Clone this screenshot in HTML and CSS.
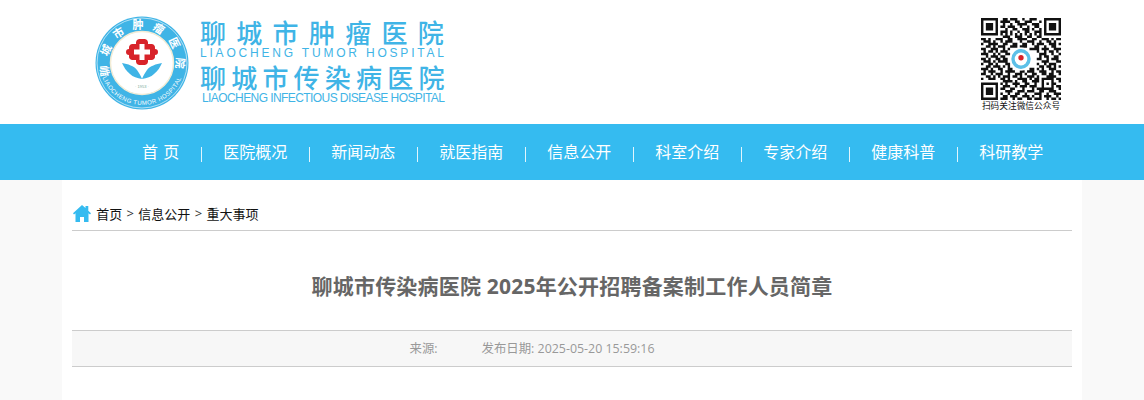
FILE: index.html
```html
<!DOCTYPE html>
<html lang="zh-CN">
<head>
    <meta charset="UTF-8">
    <meta name="viewport" content="width=device-width, initial-scale=1.0">
    <title>聊城市传染病医院 2025年公开招聘备案制工作人员简章</title>
    <link rel="stylesheet" href="styles.css">
</head>
<body>
    <header class="site-header">
        <div class="logo">
            <svg class="logo-badge" width="94" height="94" viewBox="0 0 94 94">
                <defs>
                    <path id="ringTop" d="M47 81a34 34 0 1 1 0-68a34 34 0 1 1 0 68"/>
                    <path id="ringBottom" d="M5 47a42 42 0 0 0 84 0"/>
                </defs>
                <circle cx="47" cy="47" r="46.500" fill="#3fb4e6"/>
                <circle cx="47" cy="47" r="45" fill="none" stroke="#fff" stroke-width=".6"/>
                <circle cx="47" cy="47" r="31.500" fill="#fff" stroke="#f3ecd6" stroke-width="1.500"/>
                <text class="ring-cn"><textPath href="#ringTop" startOffset="50%" text-anchor="middle">聊城市肿瘤医院</textPath></text>
                <text class="ring-en"><textPath href="#ringBottom" startOffset="50%" text-anchor="middle">LIAOCHENG TUMOR HOSPITAL</textPath></text>
                <path fill="#d8232a" d="M35 26a3.500 3.500 0 0 1 3-3h6a3.500 3.500 0 0 1 3 3v2h3a3.500 3.500 0 0 1 4 4v1a3 3 0 0 1 0 6v1a3.500 3.500 0 0 1-4 4h-3v2a3.500 3.500 0 0 1-3 3h-6a3.500 3.500 0 0 1-3-3v-2h-3a3.500 3.500 0 0 1-4-4v-1a3 3 0 0 1 0-6v-1a3.500 3.500 0 0 1 4-4h3z" transform="translate(6)"/>
                <path fill="#fff" d="M44.500 28h5v5.500h5.500v5h-5.500v5.500h-5v-5.500h-5.500v-5h5.500z"/>
                <path fill="#3fb4e6" d="M27 47c6 1 12 3 15 7 2 3 4 6 5 9-5-1-9-2-12-5-4-3-6-7-8-11z"/>
                <path fill="#3fb4e6" d="M67 47c-6 1-12 3-15 7-2 3-4 6-5 9 5-1 9-2 12-5 4-3 6-7 8-11z"/>
                <text class="ring-year" x="47" y="71.500" text-anchor="middle">· 1953 ·</text>
            </svg>
            <div class="logo-text">
                <div class="logo-cn">聊城市肿瘤医院</div>
                <div class="logo-en">LIAOCHENG TUMOR HOSPITAL</div>
                <div class="logo-cn logo-cn-second">聊城市传染病医院</div>
                <div class="logo-en logo-en-second">LIAOCHENG INFECTIOUS DISEASE HOSPITAL</div>
            </div>
        </div>
        <div class="qr-box">
            <svg class="qr" width="80" height="82" viewBox="0 0 33 33" preserveAspectRatio="none">
                <path fill="none" stroke="#111" stroke-width="1" d="M0 .5h7M9 .5h2M12 .5h3M17 .5h1M20 .5h3M26 .5h7
                    M0 1.500h1M6 1.500h1M8 1.500h4M14 1.500h2M18 1.500h3M24 1.500h1M26 1.500h1M32 1.500h1
                    M0 2.500h1M2 2.500h3M6 2.500h1M9 2.500h1M12 2.500h1M15 2.500h4M21 2.500h3M26 2.500h1M28 2.500h3M32 2.500h1
                    M0 3.500h1M2 3.500h3M6 3.500h1M8 3.500h2M11 3.500h3M16 3.500h1M19 3.500h1M22 3.500h2M26 3.500h1M28 3.500h3M32 3.500h1
                    M0 4.500h1M2 4.500h3M6 4.500h1M10 4.500h1M13 4.500h2M17 4.500h3M21 4.500h1M24 4.500h1M26 4.500h1M28 4.500h3M32 4.500h1
                    M0 5.500h1M6 5.500h1M8 5.500h3M12 5.500h1M15 5.500h1M18 5.500h2M22 5.500h3M26 5.500h1M32 5.500h1
                    M0 6.500h7M8 6.500h1M10 6.500h1M12 6.500h1M14 6.500h1M16 6.500h1M18 6.500h1M20 6.500h1M22 6.500h1M24 6.500h1M26 6.500h7
                    M9 7.500h3M14 7.500h3M19 7.500h2M23 7.500h2
                    M0 8.500h2M3 8.500h1M6 8.500h3M11 8.500h2M15 8.500h4M21 8.500h2M25 8.500h3M29 8.500h1M31 8.500h2
                    M1 9.500h3M5 9.500h1M8 9.500h1M10 9.500h3M16 9.500h1M19 9.500h3M24 9.500h1M27 9.500h2M30 9.500h1
                    M0 10.500h1M3 10.500h4M9 10.500h2M13 10.500h2M17 10.500h2M21 10.500h1M23 10.500h3M28 10.500h3M32 10.500h1
                    M2 11.500h2M5 11.500h1M7 11.500h3M12 11.500h3M16 11.500h3M22 11.500h2M26 11.500h1M29 11.500h2
                    M0 12.500h2M4 12.500h3M9 12.500h1M11 12.500h1M20 12.500h4M25 12.500h3M30 12.500h3
                    M1 13.500h1M3 13.500h2M6 13.500h1M8 13.500h3M23 13.500h1M26 13.500h1M28 13.500h2M31 13.500h1
                    M0 14.500h3M5 14.500h1M7 14.500h1M10 14.500h2M24 14.500h3M29 14.500h1M32 14.500h1
                    M2 15.500h1M4 15.500h3M8 15.500h2M24 15.500h1M26 15.500h2M30 15.500h2
                    M0 16.500h2M3 16.500h1M6 16.500h2M9 16.500h2M23 16.500h2M27 16.500h1M29 16.500h3
                    M1 17.500h3M5 17.500h1M7 17.500h4M25 17.500h3M31 17.500h2
                    M0 18.500h1M3 18.500h2M6 18.500h1M10 18.500h2M23 18.500h1M26 18.500h1M28 18.500h3
                    M2 19.500h2M5 19.500h3M9 19.500h1M11 19.500h1M24 19.500h2M27 19.500h2M30 19.500h1M32 19.500h1
                    M0 20.500h3M4 20.500h1M7 20.500h2M11 20.500h2M20 20.500h2M23 20.500h1M25 20.500h1M28 20.500h3
                    M1 21.500h1M3 21.500h3M8 21.500h1M10 21.500h4M16 21.500h2M19 21.500h3M24 21.500h3M29 21.500h1M31 21.500h2
                    M0 22.500h2M4 22.500h1M6 22.500h3M11 22.500h1M14 22.500h3M18 22.500h1M21 22.500h2M25 22.500h2M28 22.500h2M32 22.500h1
                    M2 23.500h2M5 23.500h1M7 23.500h1M9 23.500h3M13 23.500h2M16 23.500h1M19 23.500h3M23 23.500h1M27 23.500h4
                    M0 24.500h1M3 24.500h3M8 24.500h2M11 24.500h1M15 24.500h4M20 24.500h1M22 24.500h2M25 24.500h5M31 24.500h2
                    M9 25.500h4M14 25.500h1M17 25.500h2M21 25.500h3M25 25.500h1M29 25.500h1M32 25.500h1
                    M0 26.500h7M8 26.500h1M10 26.500h1M13 26.500h3M18 26.500h2M22 26.500h1M25 26.500h1M27 26.500h1M29 26.500h2
                    M0 27.500h1M6 27.500h1M9 27.500h3M14 27.500h1M16 27.500h3M20 27.500h3M25 27.500h1M29 27.500h1M31 27.500h2
                    M0 28.500h1M2 28.500h3M6 28.500h1M8 28.500h2M12 28.500h2M17 28.500h1M21 28.500h1M23 28.500h7M32 28.500h1
                    M0 29.500h1M2 29.500h3M6 29.500h1M10 29.500h3M15 29.500h3M19 29.500h3M24 29.500h2M28 29.500h3
                    M0 30.500h1M2 30.500h3M6 30.500h1M8 30.500h1M11 30.500h1M14 30.500h2M18 30.500h1M22 30.500h3M27 30.500h1M30 30.500h3
                    M0 31.500h1M6 31.500h1M9 31.500h2M12 31.500h3M17 31.500h3M21 31.500h1M24 31.500h1M26 31.500h3M31 31.500h1
                    M0 32.500h7M8 32.500h3M13 32.500h1M15 32.500h2M19 32.500h2M22 32.500h3M27 32.500h1M29 32.500h2M32 32.500h1"/>
                <circle cx="16.500" cy="16.500" r="4.600" fill="#fff"/>
                <circle cx="16.500" cy="16.500" r="4" fill="#5cc0e8"/>
                <circle cx="16.500" cy="16.500" r="2.600" fill="#fff"/>
                <circle cx="16.500" cy="16" r="1.100" fill="#d8232a"/>
            </svg>
            <div class="qr-caption">扫码关注微信公众号</div>
        </div>
    </header>

    <nav class="main-nav">
        <a href="#" class="nav-home">首 页</a>
        <span class="nav-sep"></span>
        <a href="#">医院概况</a>
        <span class="nav-sep"></span>
        <a href="#">新闻动态</a>
        <span class="nav-sep"></span>
        <a href="#">就医指南</a>
        <span class="nav-sep"></span>
        <a href="#">信息公开</a>
        <span class="nav-sep"></span>
        <a href="#">科室介绍</a>
        <span class="nav-sep"></span>
        <a href="#">专家介绍</a>
        <span class="nav-sep"></span>
        <a href="#">健康科普</a>
        <span class="nav-sep"></span>
        <a href="#">科研教学</a>
    </nav>

    <main class="container">
        <div class="breadcrumb">
            <svg class="home-icon" width="18" height="17" viewBox="0 0 18 17">
                <path fill="#35bbf0" d="M9 0l3.500 3V1h2.800v4.800L18 8.200l-1 1.300-1.500-1.200V17h-4.500v-5H7v5H2.500V8.300L1 9.500 0 8.200z"/>
            </svg>
            <a href="#">首页</a>
            <span class="crumb-sep">&gt;</span>
            <a href="#">信息公开</a>
            <span class="crumb-sep">&gt;</span>
            <a href="#">重大事项</a>
        </div>

        <h1 class="article-title">聊城市传染病医院 2025年公开招聘备案制工作人员简章</h1>

        <div class="article-meta">
            <span>来源:</span>
            <span>发布日期: 2025-05-20 15:59:16</span>
        </div>
    </main>
</body>
</html>
```

FILE: styles.css
```css
body {
    margin: 0;
    padding: 0;
    font-family: "Open Sans", "Noto Sans CJK SC", sans-serif;
    background: #f9f9f9;
}

a {
    color: inherit;
    text-decoration: none;
}

.site-header {
    height: 124px;
    background: white;
    display: flex;
    justify-content: space-between;
    align-items: flex-start;
    padding: 0 83px 0 95px;
    box-sizing: border-box;
}

.logo {
    display: flex;
    gap: 11px;
    padding-top: 15px;
}

.logo-badge {
    display: block;
    margin-top: 1px;
}

.ring-cn {
    font-size: 11px;
    font-weight: bold;
    fill: white;
    letter-spacing: 8px;
}

.ring-en {
    font-size: 6px;
    font-family: "Liberation Sans", sans-serif;
    fill: white;
    letter-spacing: .5px;
}

.ring-year {
    font-size: 4px;
    font-family: "Liberation Sans", sans-serif;
    fill: #7a9;
}

.logo-text {
    width: 244px;
    color: #3fb4e6;
    padding-top: 4px;
}

.logo-cn {
    font-size: 26px;
    line-height: 28px;
    height: 28px;
    font-weight: 500;
    white-space: nowrap;
    letter-spacing: 10.300px;
}

.logo-cn-second {
    letter-spacing: 5.200px;
    margin-top: 5px;
}

.logo-en {
    font-family: "Liberation Sans", sans-serif;
    font-size: 12px;
    line-height: 12px;
    white-space: nowrap;
    letter-spacing: 2.800px;
}

.logo-en-second {
    letter-spacing: -.58px;
    margin-top: 0;
    padding-left: 2px;
}

.qr-box {
    width: 80px;
    padding-top: 18px;
    text-align: center;
}

.qr {
    display: block;
}

.qr-caption {
    font-size: 8.700px;
    line-height: 12px;
    margin: 0 -2px;
    white-space: nowrap;
    color: #111;
}

.main-nav {
    height: 56px;
    box-sizing: border-box;
    padding: 0 0 2px 142px;
    background: #35bbf0;
    color: white;
    font-size: 16px;
    display: flex;
    align-items: center;
    gap: 21.500px;
}

.nav-home {
    word-spacing: 1px;
}

.nav-sep {
    width: 1px;
    height: 15px;
    margin-top: 6px;
    background: rgba(255, 255, 255, 0.85);
}

.container {
    width: 1000px;
    margin: 0 auto;
    padding: 0 10px;
    background: white;
    height: 220px;
}

.breadcrumb {
    height: 51px;
    border-bottom: 1px solid #ccc;
    display: flex;
    align-items: center;
    gap: 4.300px;
    padding-top: 16px;
    box-sizing: border-box;
    font-size: 13px;
    color: #111;
}

.home-icon {
    margin: 0 1px 0 1px;
}

.crumb-sep {
    color: #333;
}

.article-title {
    margin: 0;
    padding: 37px 0 25px;
    font-size: 21px;
    line-height: 37px;
    font-weight: bold;
    letter-spacing: .2px;
    color: #666;
    text-align: center;
}

.article-meta {
    height: 33px;
    border-top: 1px solid #ccc;
    border-bottom: 1px solid #ccc;
    background: #f7f7f7;
    display: flex;
    justify-content: center;
    align-items: center;
    gap: 44px;
    padding-right: 80px;
    padding-bottom: 2px;
    font-size: 12.400px;
    color: #999;
}
```
